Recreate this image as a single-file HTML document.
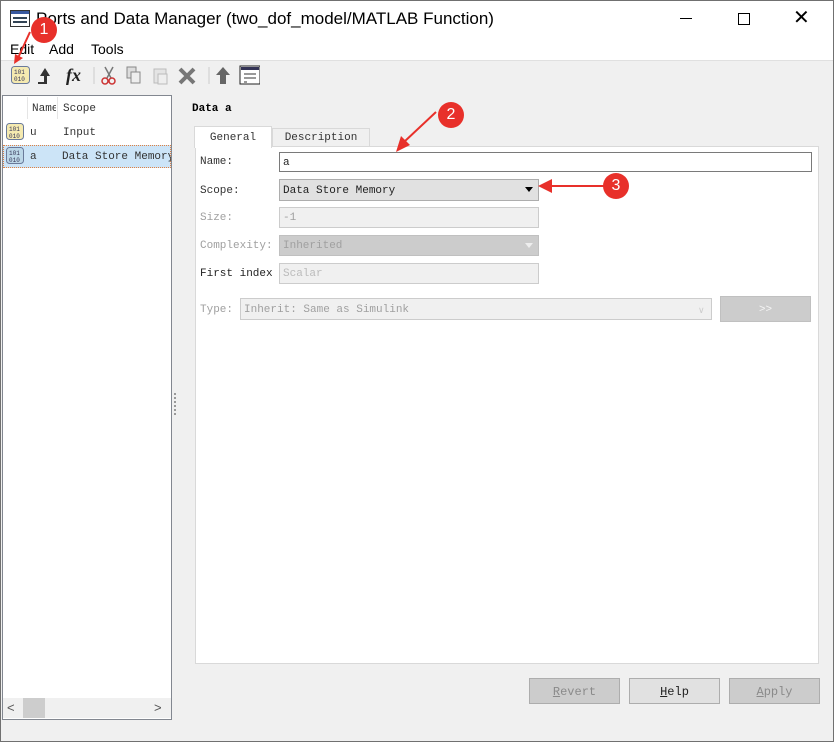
<!DOCTYPE html>
<html><head><meta charset="utf-8"><style>
*{margin:0;padding:0;box-sizing:border-box}
body{width:834px;height:742px;background:#f0f0f0;position:relative;overflow:hidden;font-family:"Liberation Mono",monospace;font-size:11px;color:#222}
.a{position:absolute}
.ui{font-family:"Liberation Sans",sans-serif}
.dis{color:#a0a0a0}
.inp{position:absolute;height:21px;border:1px solid #ccc;background:#f0f0f0;padding:4px 3px 0;color:#a0a0a0}
.btn{position:absolute;top:678px;width:91px;height:26px;border:1px solid #adadad;background:#ccc;color:#8a8a8a;text-align:center;line-height:26px;font-size:12px}
.badge{position:absolute;width:26px;height:26px;border-radius:50%;background:#e8302a;color:#fff;font-family:"Liberation Sans",sans-serif;font-size:16px;text-align:center;line-height:26px}
</style></head><body>
<div class="a" style="left:0;top:0;width:834px;height:742px;border:1px solid #707070"></div>
<div class="a" style="left:1px;top:1px;width:832px;height:59px;background:#fff"></div>
<svg class="a" style="left:10px;top:10px" width="20" height="18"><rect x="0.5" y="0.5" width="19" height="16" fill="#fff" stroke="#333"/><rect x="1" y="1" width="18" height="3" fill="#3a5aa0"/><rect x="3" y="7" width="14" height="2" fill="#345"/><rect x="3" y="11" width="14" height="2" fill="#345"/></svg>
<div class="a ui" style="left:36px;top:9px;font-size:17px;color:#000">Ports and Data Manager (two_dof_model/MATLAB Function)</div>
<div class="a ui" style="left:680px;top:18px;width:12px;height:1px;background:#000"></div>
<div class="a" style="left:738px;top:13px;width:12px;height:12px;border:1px solid #000"></div>
<div class="a ui" style="left:793px;top:5px;font-size:20px;color:#000">✕</div>
<div class="a ui" style="left:10px;top:41px;font-size:14px;color:#000">Edit</div>
<div class="a ui" style="left:49px;top:41px;font-size:14px;color:#000">Add</div>
<div class="a ui" style="left:91px;top:41px;font-size:14px;color:#000">Tools</div>
<div class="a" style="left:1px;top:60px;width:832px;height:30px;background:#f0f0f0;border-top:1px solid #e0e0e0"></div>
<svg class="a" style="left:10px;top:64px" width="250" height="22">
<rect x="1.5" y="2.5" width="18" height="17" rx="3" fill="#f5eab0" stroke="#6a7a9a"/><text x="4" y="10" font-size="6" font-family="Liberation Mono" fill="#335">101</text><text x="4" y="17" font-size="6" font-family="Liberation Mono" fill="#335">010</text>
<path d="M28 18h6v-6h-4l5-8 5 8h-3v8h-9z" fill="#333"/>
<text x="56" y="17" font-size="18" font-style="italic" font-family="Liberation Serif" font-weight="bold" fill="#222">fx</text>
<line x1="84" y1="3" x2="84" y2="20" stroke="#ccc"/>
<path d="M95 3l6 11M103 3l-6 11" stroke="#777" stroke-width="1.5"/><circle cx="95" cy="17" r="3" fill="none" stroke="#c33" stroke-width="1.5"/><circle cx="102" cy="17" r="3" fill="none" stroke="#c33" stroke-width="1.5"/>
<rect x="117" y="3" width="9" height="11" fill="#ddd" stroke="#888"/><rect x="121" y="8" width="9" height="11" fill="#eee" stroke="#888"/>
<rect x="144" y="5" width="12" height="14" fill="#e4e4e4" stroke="#bbb"/><rect x="148" y="10" width="9" height="10" fill="#eee" stroke="#bbb"/>
<path d="M170 5l14 14M184 5l-14 14" stroke="#777" stroke-width="4"/>
<line x1="199" y1="3" x2="199" y2="20" stroke="#ccc"/>
<path d="M213 3l7 8h-4v9h-6v-9h-4z" fill="#666"/>
<rect x="230" y="2" width="20" height="18" fill="#fff" stroke="#222"/><rect x="231" y="3" width="18" height="3" fill="#335"/><path d="M234 10h12M234 14h12M234 18h3" stroke="#333"/>
</svg>
<div class="badge" style="left:31px;top:17px">1</div>
<svg class="a" style="left:8px;top:30px" width="40" height="40"><path d="M22 2L10 28" stroke="#e8302a" stroke-width="2"/><path d="M6 34l1-10 8 4z" fill="#e8302a"/></svg>
<div class="a" style="left:2px;top:95px;width:170px;height:625px;border:1px solid #828790;background:#fff"></div>
<div class="a" style="left:27px;top:97px;width:1px;height:22px;background:#e5e5e5"></div>
<div class="a" style="left:57px;top:97px;width:1px;height:22px;background:#e5e5e5"></div>
<div class="a" style="left:32px;top:103px;width:24px;overflow:hidden;color:#333;white-space:nowrap">Name</div>
<div class="a" style="left:63px;top:103px;color:#333">Scope</div>
<svg class="a" style="left:5px;top:122px" width="20" height="20"><rect x="1.5" y="1.5" width="17" height="16" rx="3" fill="#f5eab0" stroke="#6a7a9a"/><text x="4" y="9" font-size="6" font-family="Liberation Mono" fill="#335">101</text><text x="4" y="16" font-size="6" font-family="Liberation Mono" fill="#335">010</text></svg>
<div class="a" style="left:30px;top:127px;color:#333">u</div>
<div class="a" style="left:63px;top:127px;color:#333">Input</div>
<div class="a" style="left:3px;top:145px;width:168px;height:23px;background:#cce4f7;border:1px dotted #e08040"></div>
<svg class="a" style="left:5px;top:146px" width="20" height="20"><rect x="1.5" y="1.5" width="17" height="16" rx="3" fill="#bcd7e8" stroke="#6a7a9a"/><text x="4" y="9" font-size="6" font-family="Liberation Mono" fill="#335">101</text><text x="4" y="16" font-size="6" font-family="Liberation Mono" fill="#335">010</text></svg>
<div class="a" style="left:30px;top:151px;color:#333">a</div>
<div class="a" style="left:62px;top:151px;color:#333;white-space:nowrap;width:109px;overflow:hidden">Data Store Memory</div>
<div class="a" style="left:3px;top:698px;width:168px;height:20px;background:#f0f0f0"></div>
<div class="a" style="left:23px;top:698px;width:22px;height:20px;background:#cdcdcd"></div>
<div class="a ui" style="left:7px;top:700px;font-size:13px;color:#555">&lt;</div>
<div class="a ui" style="left:154px;top:700px;font-size:13px;color:#555">&gt;</div>
<div class="a" style="left:174px;top:393px;width:2px;height:22px;border-left:2px dotted #999"></div>
<div class="a" style="left:192px;top:103px;font-weight:bold;color:#000">Data a</div>
<div class="a" style="left:195px;top:146px;width:624px;height:518px;background:#fff;border:1px solid #d9d9d9"></div>
<div class="a" style="left:194px;top:126px;width:78px;height:22px;background:#fff;border:1px solid #d9d9d9;border-bottom:none;text-align:center;line-height:22px;color:#333">General</div>
<div class="a" style="left:272px;top:128px;width:98px;height:18px;background:#f0f0f0;border:1px solid #d9d9d9;border-bottom:none;text-align:center;line-height:19px;color:#333">Description</div>
<div class="a" style="left:200px;top:156px;color:#333">Name:</div>
<div class="a" style="left:279px;top:152px;width:533px;height:20px;border:1px solid #7a7a7a;background:#fff;padding:4px 3px 0;color:#222">a</div>
<div class="a" style="left:200px;top:185px;color:#333">Scope:</div>
<div class="a" style="left:279px;top:179px;width:260px;height:22px;border:1px solid #adadad;background:#e1e1e1;padding:5px 3px 0;color:#222">Data Store Memory</div>
<div class="a" style="left:525px;top:187px;width:0;height:0;border-left:4px solid transparent;border-right:4px solid transparent;border-top:5px solid #000"></div>
<div class="badge" style="left:603px;top:173px">3</div>
<svg class="a" style="left:536px;top:176px" width="70" height="20"><path d="M68 10L14 10" stroke="#e8302a" stroke-width="2"/><path d="M2 10l14-7v14z" fill="#e8302a"/></svg>
<div class="a dis" style="left:200px;top:212px">Size:</div>
<div class="inp" style="left:279px;top:207px;width:260px;background:#f0f0f0">-1</div>
<div class="a dis" style="left:200px;top:240px">Complexity:</div>
<div class="inp" style="left:279px;top:235px;width:260px;background:#ccc;border-color:#c0c0c0;color:#a0a0a0">Inherited</div>
<div class="a" style="left:525px;top:243px;width:0;height:0;border-left:4px solid transparent;border-right:4px solid transparent;border-top:5px solid #eee"></div>
<div class="a" style="left:200px;top:268px;color:#222">First index</div>
<div class="inp" style="left:279px;top:263px;width:260px;color:#bbb">Scalar</div>
<div class="a dis" style="left:200px;top:304px">Type:</div>
<div class="inp" style="left:240px;top:298px;width:472px;height:22px;background:#f0f0f0;padding-top:5px">Inherit: Same as Simulink</div>
<div class="a ui" style="left:698px;top:305px;color:#ccc;font-size:9px">∨</div>
<div class="a" style="left:720px;top:296px;width:91px;height:26px;background:#ccc;border:1px solid #c0c0c0;color:#f5f5f5;text-align:center;line-height:26px">&gt;&gt;</div>
<div class="badge" style="left:438px;top:102px">2</div>
<svg class="a" style="left:390px;top:110px" width="50" height="50"><path d="M46 2L14 32" stroke="#e8302a" stroke-width="2"/><path d="M6 42l5-16 9 9z" fill="#e8302a"/></svg>
<div class="btn" style="left:529px"><u>R</u>evert</div>
<div class="btn" style="left:629px;background:#e1e1e1;color:#222"><u>H</u>elp</div>
<div class="btn" style="left:729px"><u>A</u>pply</div>
</body></html>
